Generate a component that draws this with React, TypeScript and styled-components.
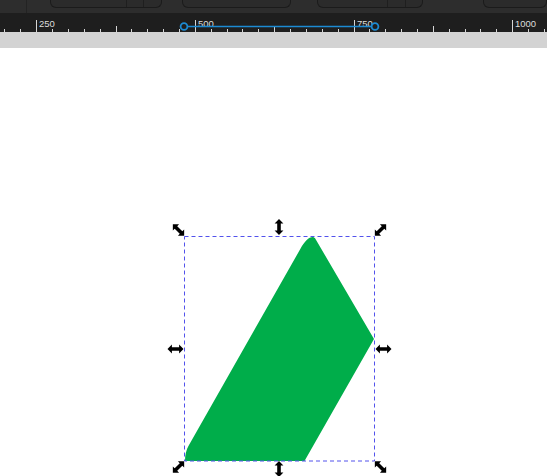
import React from 'react'
import styled, { createGlobalStyle } from 'styled-components'

const GlobalStyle = createGlobalStyle`
  html, body {
    margin: 0;
    padding: 0;
    background: #ffffff;
    overflow: hidden;
  }
`

const Page = styled.div`
  display: flex;
  flex-direction: column;
  width: 547px;
  height: 476px;
  font-family: 'Liberation Sans', Arial, sans-serif;
`

const Toolbar = styled.div`
  display: flex;
  align-items: flex-end;
  height: 13px;
  background: #2d2d2d;
  overflow: hidden;
`

const Separator = styled.div`
  width: 1px;
  height: 13px;
  margin-left: 26px;
  background: #232323;
  align-self: flex-start;
`

interface GroupProps {
  gap: number
}

const ButtonGroup = styled.div<GroupProps>`
  display: flex;
  height: 22px;
  margin-left: ${({ gap }) => gap}px;
  margin-bottom: 5px;
  border: 1px solid #1b1b1b;
  border-top: none;
  border-radius: 0 0 6px 6px;
  background: #2b2b2b;
  box-sizing: border-box;
  overflow: hidden;
`

interface SegmentProps {
  w: number
}

const Segment = styled.div<SegmentProps>`
  width: ${({ w }) => w}px;
  height: 100%;
  & + & {
    border-left: 1px solid #1f1f1f;
  }
`

const Ruler = styled.div`
  position: relative;
  height: 19px;
  background: #1e1e1e;
  overflow: hidden;
`

interface TickProps {
  size: 'major' | 'medium' | 'minor'
}

const Tick = styled.div<TickProps>`
  position: absolute;
  bottom: 0;
  width: 1px;
  height: ${({ size }) =>
    size === 'major' ? 12 : size === 'medium' ? 6 : 3}px;
  background: #d6d6d6;
`

const Label = styled.span`
  position: absolute;
  top: 6px;
  font-size: 9.5px;
  line-height: 10px;
  color: #dcdcdc;
  white-space: nowrap;
`

const Measure = styled.svg`
  position: absolute;
  left: 0;
  top: 0;
`

const Gutter = styled.div`
  height: 16px;
  background: #d3d3d3;
`

const Canvas = styled.div`
  flex: 1;
  background: #ffffff;
  svg {
    display: block;
  }
`

const toPx = (v: number) => 36.67 + (v - 250) * 0.63467

const ticks: { v: number; x: number; size: 'major' | 'medium' | 'minor' }[] =
  []
for (let v = -100; v <= 1100; v += 25) {
  const x = Math.round(toPx(v) - 0.5)
  if (x < 0 || x > 546) continue
  const size = v % 250 === 0 ? 'major' : v % 125 === 0 ? 'medium' : 'minor'
  ticks.push({ v, x, size })
}

// chunky double-headed arrow, centred on 0,0, pointing along x
const ARROW =
  'M-8 0 L-3.6 -4.4 L-3.6 -1.8 L3.6 -1.8 L3.6 -4.4 L8 0 L3.6 4.4 L3.6 1.8 L-3.6 1.8 L-3.6 4.4 Z'

const handles = [
  { x: 178.5, y: 230, r: 45 },
  { x: 279, y: 227, r: 90 },
  { x: 380.5, y: 230, r: -45 },
  { x: 175.5, y: 349, r: 0 },
  { x: 383.5, y: 349, r: 0 },
  { x: 178.5, y: 467, r: -45 },
  { x: 279, y: 469, r: 90 },
  { x: 380.5, y: 467, r: 45 },
]

const App: React.FC = () => (
  <Page>
    <GlobalStyle />
    <Toolbar>
      <Separator />
      <ButtonGroup gap={23}>
        <Segment w={76} />
        <Segment w={16} />
        <Segment w={18} />
      </ButtonGroup>
      <ButtonGroup gap={20}>
        <Segment w={108} />
      </ButtonGroup>
      <ButtonGroup gap={26}>
        <Segment w={70} />
        <Segment w={18} />
        <Segment w={16} />
      </ButtonGroup>
      <ButtonGroup gap={60}>
        <Segment w={63} />
      </ButtonGroup>
    </Toolbar>
    <Ruler>
      {ticks.map((t) => (
        <Tick key={t.v} size={t.size} style={{ left: t.x }} />
      ))}
      {ticks
        .filter((t) => t.size === 'major')
        .map((t) => (
          <Label key={`l${t.v}`} style={{ left: t.x + 3 }}>
            {t.v}
          </Label>
        ))}
      <Measure width="547" height="19" viewBox="0 13 547 19">
        <line
          x1="187.5"
          y1="26.5"
          x2="371.5"
          y2="26.5"
          stroke="#1c8ad2"
          strokeWidth="1.6"
        />
        <circle
          cx="184"
          cy="26.5"
          r="3.4"
          fill="#1e1e1e"
          stroke="#1c8ad2"
          strokeWidth="1.8"
        />
        <circle
          cx="375"
          cy="26.5"
          r="3.4"
          fill="#1e1e1e"
          stroke="#1c8ad2"
          strokeWidth="1.8"
        />
      </Measure>
    </Ruler>
    <Gutter />
    <Canvas>
      <svg width="547" height="428" viewBox="0 48 547 428">
        <path
          d="M300.3 249 C304.5 241.5 308.5 237 313 237 C314 237 315 238 315.5 239 L374 339 L304.5 461 L185 461 C185 455 186 450 189 445 Z"
          fill="#00ad4a"
        />
        <rect
          x="184.5"
          y="236.5"
          width="190"
          height="224.5"
          fill="none"
          stroke="#5252ec"
          strokeWidth="1"
          strokeDasharray="4 3"
        />
        {handles.map((h, i) => (
          <path
            key={i}
            d={ARROW}
            fill="#000"
            transform={`translate(${h.x} ${h.y}) rotate(${h.r})`}
          />
        ))}
      </svg>
    </Canvas>
  </Page>
)

export default App
